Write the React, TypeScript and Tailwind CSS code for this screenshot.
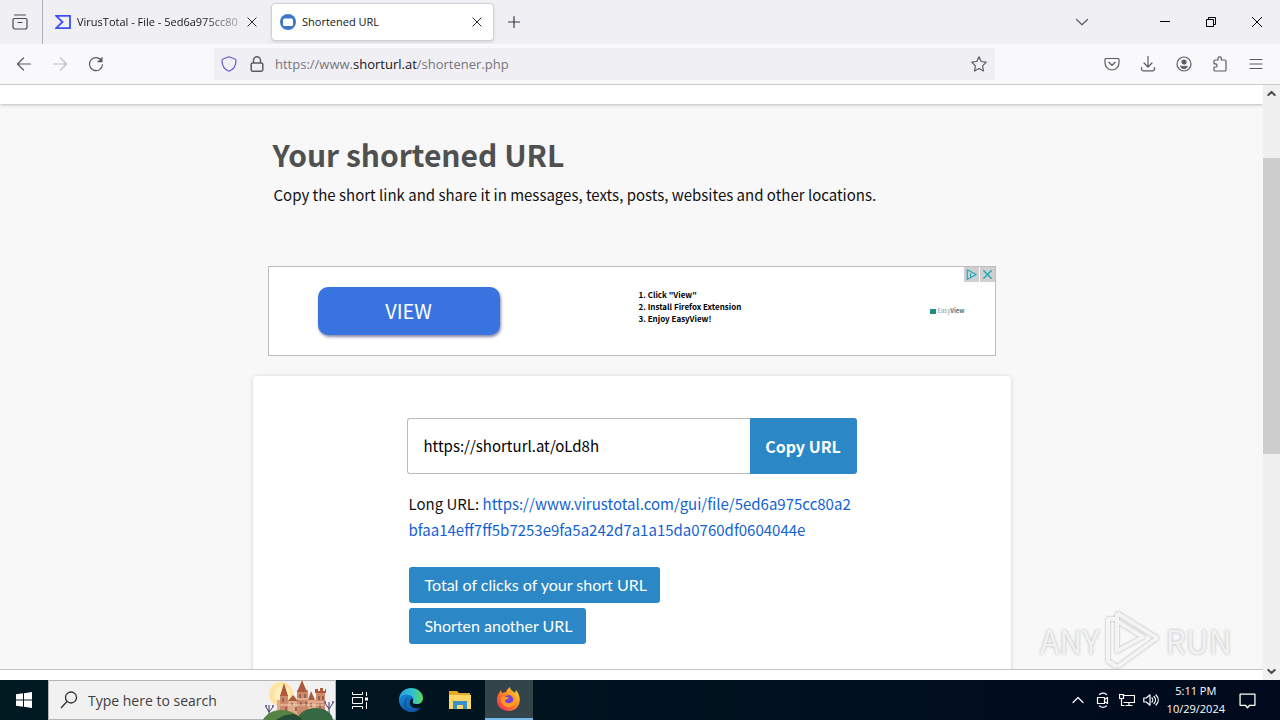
import type { ReactNode } from "react";

type IconProps = { className?: string; children: ReactNode };

function Icon({ className = "size-4", children }: IconProps) {
    return (
        <svg className={className} viewBox="0 0 16 16" fill="none" stroke="currentColor" strokeWidth="1.2" strokeLinecap="round" strokeLinejoin="round" aria-hidden="true">
            {children}
        </svg>
    );
}

function TabBar() {
    return (
        <div className="flex h-11 shrink-0 items-center bg-[#f0f0f4] text-[#15141a]">
            <button className="flex h-11 w-[43px] items-center justify-center border-r border-[#b0b0b8] pr-[2px] text-[#4a4a55]" aria-label="Recent tabs">
                <Icon>
                    <path d="M2.5 1h11M2.5 4.5h11a1.5 1.5 0 0 1 1.5 1.5v7a2 2 0 0 1-2 2H3a2 2 0 0 1-2-2V6a1.5 1.5 0 0 1 1.5-1.5zM6 8.500h4" />
                </Icon>
            </button>
            <div className="flex h-9 w-[224px] items-center gap-[6px] pr-2 pl-3">
                <svg className="size-4 shrink-0" viewBox="0 0 16 16" fill="none" stroke="#394eff" strokeWidth="1.8" aria-hidden="true">
                    <path d="M1 1.800h14v12.400H1L7.500 8z" />
                </svg>
                <span className="flex-1 bg-linear-to-r from-[#15141a] from-75% to-[#15141a]/30 bg-clip-text pt-px text-[11px] whitespace-nowrap text-transparent">VirusTotal - File - 5ed6a975cc80</span>
                <button className="mr-px" aria-label="Close tab">
                    <Icon className="size-3"><path d="M2.500 2.500l11 11m0-11l-11 11" /></Icon>
                </button>
            </div>
            <div className="ml-1 flex h-[38px] w-[223px] items-center gap-[6px] rounded border border-[#d0d0d6] bg-white px-2 shadow-sm">
                <svg className="size-4 shrink-0" viewBox="0 0 16 16" aria-hidden="true">
                    <circle cx="8" cy="8" r="8" fill="#3f77c8" />
                    <rect x="3" y="4.500" width="10" height="7.500" rx="1.500" fill="#fff" />
                </svg>
                <span className="flex-1 pt-px text-[11px] whitespace-nowrap">Shortened URL</span>
                <button className="mr-[2px]" aria-label="Close tab">
                    <Icon className="size-3"><path d="M2.500 2.500l11 11m0-11l-11 11" /></Icon>
                </button>
            </div>
            <button className="ml-3 text-[#3a3944]" aria-label="New tab">
                <Icon><path d="M8 2.500v11M2.500 8h11" /></Icon>
            </button>
            <button className="ml-auto text-[#5b5b66]" aria-label="List all tabs">
                <Icon><path d="M2.500 5.500L8 10.800l5.500-5.300" /></Icon>
            </button>
            <div className="ml-[52px] flex text-black">
                <button className="flex w-[46px] justify-center" aria-label="Minimize">
                    <svg className="size-3" viewBox="0 0 12 12" stroke="currentColor"><path d="M1 5.500h10" /></svg>
                </button>
                <button className="flex w-[46px] justify-center" aria-label="Restore">
                    <svg className="size-3" viewBox="0 0 12 12" fill="none" stroke="currentColor"><path d="M1.500 3.500h7v7h-7zM3.500 3.500v-2h7v7h-2" /></svg>
                </button>
                <button className="flex w-[46px] justify-center" aria-label="Close window">
                    <svg className="size-3" viewBox="0 0 12 12" stroke="currentColor"><path d="M1 1l10 10M11 1L1 11" /></svg>
                </button>
            </div>
        </div>
    );
}

function NavBar() {
    return (
        <div className="flex h-[41px] shrink-0 items-center border-b border-[#cccccc] bg-[#f9f9fb] text-[#5b5b66]">
            <div className="flex w-[214px] items-center gap-5 pl-4">
                <button aria-label="Back"><Icon><path d="M14.500 8h-13M7.500 2L1.500 8l6 6" /></Icon></button>
                <button className="text-[#bfbfc6]" aria-label="Forward"><Icon><path d="M1.500 8h13M8.500 2l6 6-6 6" /></Icon></button>
                <button aria-label="Reload">
                    <Icon><path d="M13.700 5A6.500 6.500 0 1 0 14.500 8.500" /><path d="M14.200 1.500V6H9.700z" fill="currentColor" strokeWidth="0.600" /></Icon>
                </button>
            </div>
            <div className="flex h-8 min-w-0 flex-1 items-center bg-[#f0f0f4] pr-2 pl-[7px]">
                <svg className="size-4 shrink-0" viewBox="0 0 16 16" fill="none" stroke="#6a5acd" strokeWidth="1.200" strokeLinejoin="round" aria-hidden="true">
                    <path d="M8 .8L14 3c.8.300 1 .8 1 1.500C15 9.500 12.500 13.500 8 15.300 3.500 13.500 1 9.500 1 4.500 1 3.800 1.200 3.300 2 3z" />
                </svg>
                <Icon className="ml-3 size-4 shrink-0">
                    <path d="M3.500 7h9A1.300 1.300 0 0 1 13.800 8.300v5.400a1.500 1.500 0 0 1-1.500 1.500H3.700a1.500 1.500 0 0 1-1.500-1.500V8.300A1.300 1.300 0 0 1 3.500 7zM4.500 7V4.200a3.500 3.500 0 0 1 7 0V7" strokeWidth="1.500" />
                </Icon>
                <div className="ml-[10px] flex-1 pt-[2px] text-[13px] whitespace-nowrap text-[#75757e]">
                    https://www.<span className="text-[#15141a]">shorturl.at</span>/shortener.php
                </div>
                <button aria-label="Bookmark this page">
                    <Icon><path d="M8 .8l2.200 4.700 5 .7-3.600 3.600.900 5.200L8 12.500 3.500 15l.9-5.200L.8 6.200l5-.7z" /></Icon>
                </button>
            </div>
            <div className="flex w-[285px] items-center justify-end gap-5 pr-4">
                <button aria-label="Save to Pocket"><Icon><path d="M2 2.500h12a1 1 0 0 1 1 1V7A7 7 0 0 1 1 7V3.500a1 1 0 0 1 1-1zM4.800 6.300L8 9.300l3.200-3" /></Icon></button>
                <button aria-label="Downloads"><Icon><path d="M8 .5v10.300M4 7l4 4 4-4M1.500 11.500V13a1.800 1.800 0 0 0 1.800 1.800h9.400a1.800 1.800 0 0 0 1.800-1.800v-1.500" /></Icon></button>
                <button aria-label="Account"><Icon><circle cx="8" cy="8" r="7" /><circle cx="8" cy="6" r="2" fill="currentColor" /><path d="M4.500 10.200h7c0 1.500-1.500 2.600-3.500 2.600s-3.500-1.100-3.500-2.600z" fill="currentColor" strokeWidth="0.500" /></Icon></button>
                <button aria-label="Extensions"><Icon><path d="M2 5.200A1.200 1.200 0 0 1 3.200 4H6V2.500a1.700 1.700 0 0 1 3.400 0V4h3.400A1.200 1.200 0 0 1 14 5.200v8.600a1.200 1.200 0 0 1-1.200 1.200H3.200A1.200 1.200 0 0 1 2 13.800V11h1.500a1.600 1.600 0 0 0 0-3.200H2z" /></Icon></button>
                <button aria-label="Menu"><Icon><path d="M2 3.500h12M2 8h12M2 12.500h12" /></Icon></button>
            </div>
        </div>
    );
}

function Advert() {
    return (
        <div className="relative mx-auto mt-[59px] flex h-[90px] w-[728px] items-center border border-[#bdbdbd] bg-white">
            <button className="ml-[49px] h-12 w-[182px] rounded-[10px] bg-[#3873e0] text-[20px] text-white shadow-[1px_2px_3px_#8888aa]">VIEW</button>
            <ol className="ml-[139px] flex-1 list-inside list-decimal pb-2 text-[8px] leading-3 font-bold text-black">
                <li>Click "View"</li>
                <li>Install Firefox Extension</li>
                <li>Enjoy EasyView!</li>
            </ol>
            <div className="mr-[30px] flex items-center gap-px text-[6px] leading-none text-[#8aa0a5]">
                <span className="h-[5px] w-[6px] bg-[#1b8f85]"></span>
                <span>Easy<b className="text-[#58707a]">View</b></span>
            </div>
            <div className="absolute top-0 right-0 flex gap-px text-[#20a5b8]">
                <button className="size-[15px] bg-[#cfcfcf]" aria-label="Ad choices">
                    <Icon className="size-[15px]"><path d="M3.500 3v10L13 8zM7 7v3" /></Icon>
                </button>
                <button className="size-[15px] bg-[#cfcfcf]" aria-label="Close ad">
                    <Icon className="size-[15px]"><path d="M4 4l8 8m0-8l-8 8" strokeWidth="1.500" /></Icon>
                </button>
            </div>
        </div>
    );
}

function ShortenedPage() {
    return (
        <main className="min-w-0 flex-1 overflow-hidden bg-[#f8f8f8] font-['Noto_Sans_CJK_SC',sans-serif] text-[#111111]">
            <div className="h-[19px] bg-white shadow-[0_1px_3px_#bbbbbb]"></div>
            <div className="mx-auto w-[758px]">
                <div className="pt-7 pl-5">
                    <h1 className="text-[30px] leading-[44px] font-bold text-[#505050]">Your shortened URL</h1>
                    <p className="mt-[7px] ml-px text-[15px] leading-6">Copy the short link and share it in messages, texts, posts, websites and other locations.</p>
                </div>
                <Advert />
                <section className="mt-5 h-[400px] rounded bg-white pt-[42px] shadow-[0_0_4px_#d4d4d4]">
                    <div className="mx-auto w-[450px]">
                        <div className="flex h-14">
                            <input className="min-w-0 flex-1 rounded-l-[3px] border border-r-0 border-[#bbbbbb] px-4 text-[15px] text-black" aria-label="Shortened URL" defaultValue="https://shorturl.at/oLd8h" />
                            <button className="w-[107px] rounded-r-[3px] bg-[#2b87c5] text-[16px] font-bold text-white">Copy URL</button>
                        </div>
                        <p className="mt-[17px] ml-[2px] text-[15px] leading-[26px] whitespace-nowrap">
                            Long URL:{" "}
                            <a className="text-[#1362d3]" href="#long">
                                https://www.virustotal.com/gui/file/5ed6a975cc80a2<br />bfaa14eff7ff5b7253e9fa5a242d7a1a15da0760df0604044e
                            </a>
                        </p>
                        <div className="mt-6 ml-[2px] flex flex-col items-start gap-[5px] font-['Lato',sans-serif] text-[16px] text-white">
                            <a className="rounded-[3px] bg-[#2b87c5] pr-[13px] pl-4 leading-9" href="#clicks">Total of clicks of your short URL</a>
                            <a className="rounded-[3px] bg-[#2b87c5] pr-[13px] pl-4 leading-9" href="#another">Shorten another URL</a>
                        </div>
                    </div>
                </section>
            </div>
        </main>
    );
}

function Scrollbar() {
    return (
        <div className="flex w-[17px] flex-col items-center bg-[#f0f0f0] text-[#505050]">
            <Icon className="size-[17px]"><path d="M5 9.500l3-3 3 3" strokeWidth="2" /></Icon>
            <div className="mt-14 h-[296px] w-full bg-[#cdcdcd]"></div>
            <Icon className="mt-auto size-[17px]"><path d="M5 6.500l3 3 3-3" strokeWidth="2" /></Icon>
        </div>
    );
}

function Watermark() {
    return (
        <div className="pointer-events-none absolute right-12 bottom-[49px] flex items-center font-['Noto_Sans_CJK_SC',sans-serif] text-[32px] leading-[60px] text-[#f2f2f2] [text-shadow:0_0_3px_#b4b4b4]">
            <span>ANY</span>
            <svg className="mx-1 h-[62px] w-[58px] drop-shadow-[0_0_1px_#a8a8a8]" viewBox="0 0 58 62" fill="none" stroke="#f4f4f4" strokeWidth="4" strokeLinejoin="round" aria-hidden="true">
                <path d="M14 4L54 29 14 58M14 4v38l26-14L14 12M14 10H5v42l9 6" />
            </svg>
            <span>RUN</span>
        </div>
    );
}

function Castle() {
    return (
        <svg className="h-10 w-[72px] shrink-0" viewBox="0 0 72 40" aria-hidden="true">
            <circle cx="18" cy="14" r="12" fill="#ffe3a0" />
            <circle cx="19" cy="14" r="8" fill="#ffefbd" />
            <path d="M14 20h48v17H14z" fill="#e0ab8a" />
            <path d="M17 15h8v20h-8zM34 10h11v25H34zM53 12h9v23h-9z" fill="#cc8a6a" />
            <path d="M17 16l4-13 4 13zM34 12l5-12 5 12zM52 13V9h3v2h2V8h3v3h2V9h1v4z" fill="#b0583c" />
            <path d="M25 21l5-6 5 6zM45 20l3-9 4 9z" fill="#a95a3e" />
            <path d="M20 18v4M29 23v3M37 14v4M42 14v4M38 22v4M43 22v4M48 23v4M56 16v4M60 16v4M57 24v4M23 27v4M33 27v4" stroke="#84504a" strokeWidth="1.400" />
            <path d="M17 25h44M33 19h12M53 22h9" stroke="#f3d0b4" strokeWidth="1" />
            <path d="M6 38V25M6 32l-3-5M6 32l4-5M66 35V22M66 29l-4-6M66 29l4-6" stroke="#44375f" strokeWidth="1" />
            <path d="M2 26h2M9 26h2M61 22h2M69 22h2" stroke="#7a69ac" strokeWidth="2" />
            <path d="M34 40c1-7 9-12 19-12s16 5 17 12z" fill="#356941" />
            <path d="M0 40c3-6 10-10 18-10s18 4 20 10z" fill="#568243" />
            <path d="M13 40c5-4 12-6 17-6 5 1 8 4 9 6z" fill="#244c37" />
        </svg>
    );
}

function Taskbar() {
    return (
        <footer className="flex h-10 shrink-0 bg-linear-to-r from-[#001a22] to-[#000a1c] text-white">
            <button className="flex w-12 items-center justify-center" aria-label="Start">
                <svg className="size-4" viewBox="0 0 16 16" fill="#fff"><path d="M0 2.300L7 1.300v6.200H0zM8 1.200L16 0v7.500H8zM0 8.500h7v6.200l-7-1zM8 8.500h8V16l-8-1.200z" /></svg>
            </button>
            <label className="flex w-72 items-center border border-[#b5b5b5] bg-[#f1f1f1] pl-[11px] text-[#303030]">
                <svg className="size-[18px] shrink-0" viewBox="0 0 18 18" fill="none" stroke="currentColor" strokeWidth="1.300" aria-hidden="true"><circle cx="11" cy="6.500" r="5.500" /><path d="M7 10.500L1 17" /></svg>
                <input className="ml-[10px] min-w-0 flex-1 text-[14px] outline-none placeholder:text-[#404040]" placeholder="Type here to search" aria-label="Search" />
                <Castle />
            </label>
            <button className="flex w-12 items-center justify-center" aria-label="Task view">
                <svg className="size-[18px]" viewBox="0 0 18 18" fill="none" stroke="currentColor"><path d="M1.500 1v2.500h10V1M1.500 6.500h10v6h-10zM1.500 18v-2.500h10V18M15.500 1v4M15.500 11v7" /><path d="M14 6.500h3v3h-3z" fill="currentColor" stroke="none" /></svg>
            </button>
            <button className="flex w-[54px] items-center justify-center" aria-label="Edge">
                <svg className="size-6" viewBox="0 0 24 24">
                    <defs>
                        <linearGradient id="edgeTop" x1="0" x2="1"><stop stopColor="#249ee5" /><stop offset=".6" stopColor="#35c2cc" /><stop offset="1" stopColor="#62d957" /></linearGradient>
                        <linearGradient id="edgeLow" x1="0" x2="1" y2="1"><stop stopColor="#1687d9" /><stop offset="1" stopColor="#114a9b" /></linearGradient>
                    </defs>
                    <path d="M0 12C0 5 5 0 12 0s12 5 12 10c0 4-3 6-6 6-4 0-5-1-4-3 1-3-1-5-4-5-5 0-9 3-10 7z" fill="url(#edgeTop)" />
                    <path d="M0 12c1-4 4-6 9-5 3 0 5 2 5 4-4-1-5 8 2 9 3 1 5 0 6-1-2 3-5 5-9 5C5 24 0 18 0 12z" fill="url(#edgeLow)" />
                    <path d="M10 9c-5 3-4 12 3 15-6 0-9-4-8-9 0-3 2-5 5-6z" fill="#0c59a4" />
                </svg>
            </button>
            <button className="flex w-11 items-center justify-center" aria-label="File Explorer">
                <svg className="h-[18px] w-[22px]" viewBox="0 0 22 18"><path d="M0 0h8l2 2h11v15H0z" fill="#e6a928" /><path d="M0 4h22v14H0z" fill="#ffd764" /><path d="M4 10h14v8h-4v-4H8v4H4z" fill="#3991cc" /></svg>
            </button>
            <button className="ml-[3px] flex w-12 items-center justify-center border-b-2 border-[#76b9ed] bg-[#33444b]" aria-label="Firefox">
                <svg className="size-6" viewBox="0 0 24 24">
                    <defs><linearGradient id="fox" x1="1" x2="0" y2="1"><stop stopColor="#ffe63e" /><stop offset=".45" stopColor="#ff8a20" /><stop offset="1" stopColor="#ed2262" /></linearGradient></defs>
                    <path d="M2 6l2-3 1 3 4-1c1-3 3-4 4-5 0 3 3 4 5 6l1-3c7 8 4 21-7 21C1 24-3 14 2 6z" fill="url(#fox)" />
                    <circle cx="12" cy="14" r="6" fill="#7543d9" />
                    <path d="M4 11c3-3 6-1 8 0-1 2-4 1-4 3 1 3 6 3 8 0 1-3-1-5-3-6 6 0 7 7 4 10-5 5-14 1-13-7z" fill="#ff9824" />
                </svg>
            </button>
            <div className="ml-auto flex items-center">
                <button className="mr-[9px]" aria-label="Show hidden icons"><Icon><path d="M3 10.500l5-5 5 5" /></Icon></button>
                <Icon className="mr-2 size-4"><path d="M2.500 5.500h7v6h-7zM9.500 7.500l3-2v6l-3-2M4.500 2.500c2-1.500 5-1.500 7 0M4.500 14c2 1.500 5 1.500 7 0" /></Icon>
                <Icon className="mr-2 size-4"><path d="M4 3.500h11.500v7H5M10 10.500v3M7 13.500h6M.5 2.500h4v4h-4zM2.500 6.500v7H5" /></Icon>
                <Icon className="mr-2 size-4"><path d="M.8 6h2.500L7 2.800v10.400L3.300 10H.8zM9 6c1 1 1 3 0 4M11 4.500c2 2 2 5 0 7M13 3c3 3 3 7 0 10" /></Icon>
                <div className="text-center text-[11px] leading-[18px]">
                    <div>5:11 PM</div>
                    <div>10/29/2024</div>
                </div>
                <button className="mr-6 ml-[14px]" aria-label="Notifications"><Icon className="size-[17px]"><path d="M1 2h14v10.500h-5L8 14.800l-2-2.300H1z" /></Icon></button>
            </div>
        </footer>
    );
}

export default function App() {
    return (
        <div className="relative flex h-screen flex-col overflow-hidden bg-white font-['Open_Sans',sans-serif]">
            <TabBar />
            <NavBar />
            <div className="flex min-h-0 flex-1 bg-white">
                <div className="mb-[10px] flex min-w-0 flex-1 border-b border-[#c4c4c4]">
                    <ShortenedPage />
                </div>
                <Scrollbar />
            </div>
            <Taskbar />
            <Watermark />
        </div>
    );
}
